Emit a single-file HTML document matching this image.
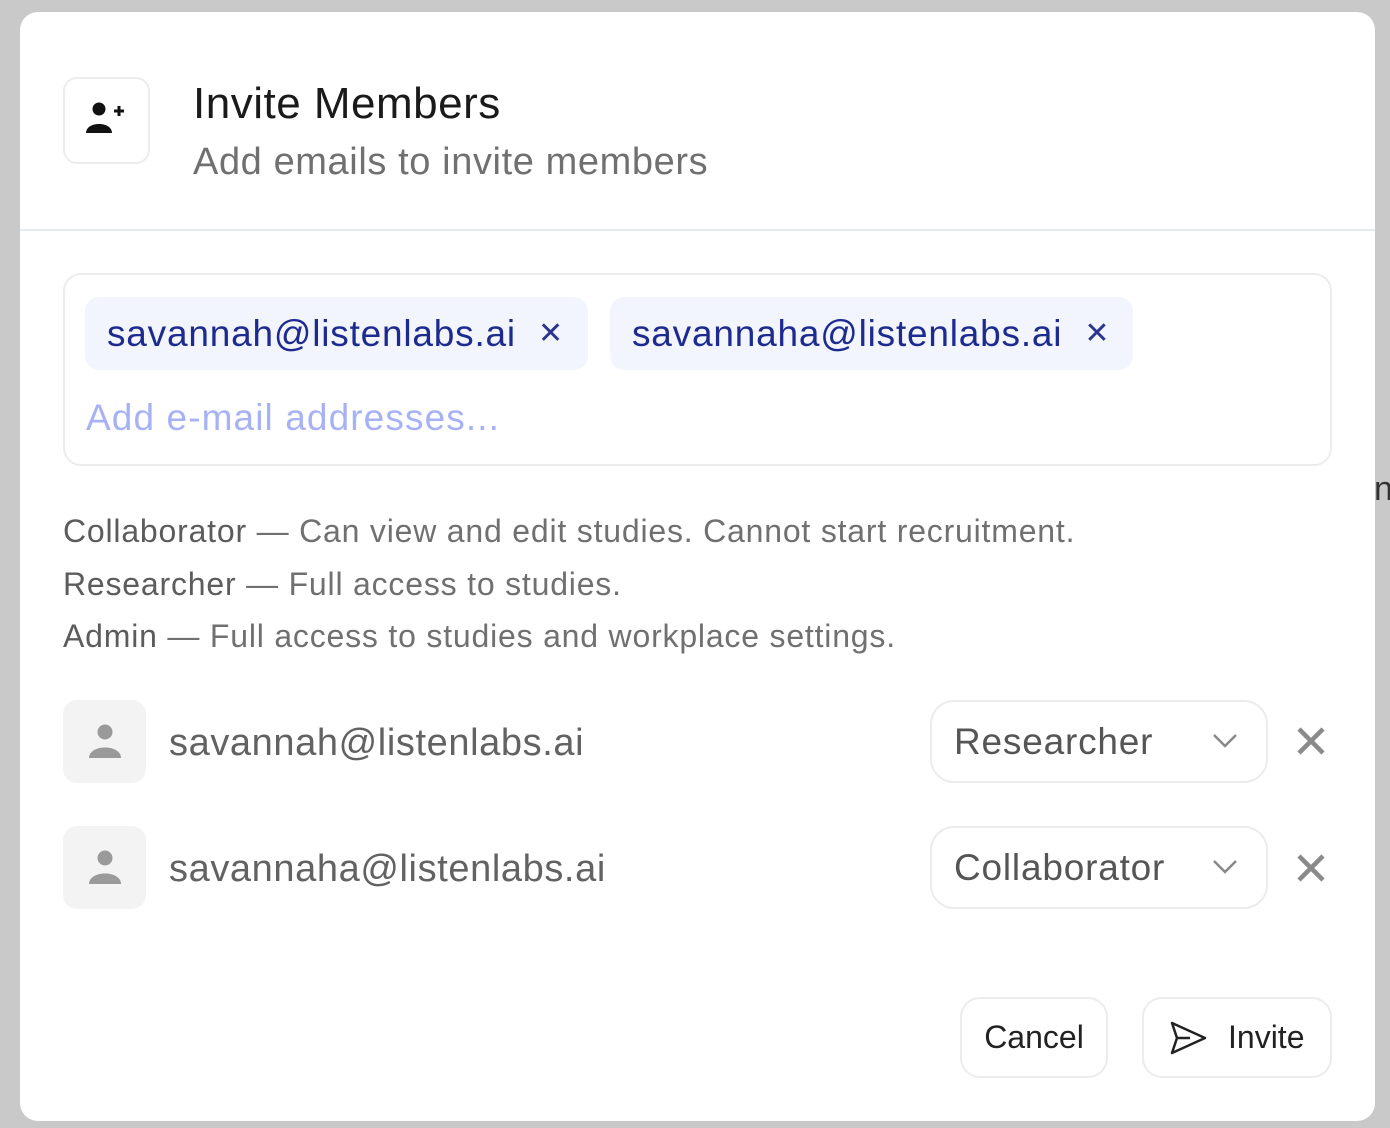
<!DOCTYPE html>
<html><head><meta charset="utf-8"><style>
*{box-sizing:border-box;margin:0;padding:0}
body{width:1390px;height:1128px;background:#c9c9c9;font-family:"Liberation Sans",sans-serif;position:relative;overflow:hidden}
.a{position:absolute;white-space:nowrap}
.modal{position:absolute;left:20px;top:12px;width:1355px;height:1109px;background:#fff;border-radius:18px}
.box{position:absolute;border:2px solid #ececec;border-radius:18px;background:#fff}
.chip{position:absolute;top:297px;height:73px;background:#f2f5fd;border-radius:14px;color:#1d2a8f;font-size:37px;letter-spacing:0.8px;display:flex;align-items:center;padding-left:22px}
.chip span.x{font-size:30px;margin-left:22px;color:#2a3590}
.desc{position:absolute;left:63px;font-size:32px;letter-spacing:0.8px;color:#707070;white-space:nowrap}
.desc b{font-weight:normal;color:#5c5c5c}
.av{position:absolute;left:63px;width:83px;height:83px;background:#f3f3f3;border-radius:14px}
.em{position:absolute;left:169px;font-size:38px;letter-spacing:0.6px;color:#626262;white-space:nowrap}
.sel{position:absolute;left:930px;width:338px;height:83px;border:2px solid #ececec;border-radius:24px;font-size:37px;letter-spacing:0.8px;color:#555;display:flex;align-items:center;padding-left:22px}
.btn{position:absolute;top:997px;height:81px;border:2px solid #ececec;border-radius:20px;font-size:32px;color:#222;display:flex;align-items:center;justify-content:center}
</style></head><body>
<div class="a" style="left:1374px;top:470px;font-size:34px;color:#333">n</div>
<div class="modal"></div>
<div class="box" style="left:63px;top:77px;width:87px;height:87px;border-radius:14px"></div>
<svg class="a" style="left:86px;top:101px" width="40" height="34" viewBox="0 0 40 34">
<circle cx="13" cy="8" r="6.5" fill="#111"/><path d="M0 32 C0 20 26 20 26 32 Z" fill="#111"/>
<path d="M28 10h10M33 5v10" stroke="#111" stroke-width="3"/></svg>
<div class="a" style="left:193px;top:79px;font-size:44px;letter-spacing:0.5px;line-height:50px;color:#1a1a1a">Invite Members</div>
<div class="a" style="left:193px;top:139px;font-size:38px;letter-spacing:0.6px;line-height:46px;color:#707070">Add emails to invite members</div>
<div class="a" style="left:20px;top:229px;width:1355px;height:2px;background:#e7eaee"></div>
<div class="box" style="left:63px;top:273px;width:1269px;height:193px"></div>
<div class="chip" style="left:85px;width:503px">savannah@listenlabs.ai<span class="x">✕</span></div>
<div class="chip" style="left:610px;width:523px">savannaha@listenlabs.ai<span class="x">✕</span></div>
<div class="a" style="left:86px;top:395px;font-size:37px;letter-spacing:1.1px;line-height:46px;color:#a7b2f6">Add e-mail addresses...</div>
<div class="desc" style="top:513px"><b>Collaborator</b> — Can view and edit studies. Cannot start recruitment.</div>
<div class="desc" style="top:566px"><b>Researcher</b> — Full access to studies.</div>
<div class="desc" style="top:618px"><b>Admin</b> — Full access to studies and workplace settings.</div>
<div class="av" style="top:700px"></div>
<svg class="a" style="left:88px;top:723px" width="34" height="36" viewBox="0 0 34 36"><circle cx="17" cy="9" r="7.5" fill="#9a9a9a"/><path d="M1 35 C1 21 33 21 33 35 Z" fill="#9a9a9a"/></svg>
<div class="em" style="top:722px">savannah@listenlabs.ai</div>
<div class="sel" style="top:700px">Researcher</div>
<svg class="a" style="left:1212px;top:732px" width="26" height="18" viewBox="0 0 26 18"><path d="M2 3l11 11 11-11" fill="none" stroke="#888" stroke-width="2.5"/></svg>
<svg class="a" style="left:1297px;top:727px" width="28" height="28" viewBox="0 0 28 28"><path d="M2 2l24 24M26 2L2 26" stroke="#8a8a8a" stroke-width="4.5"/></svg>
<div class="av" style="top:826px"></div>
<svg class="a" style="left:88px;top:849px" width="34" height="36" viewBox="0 0 34 36"><circle cx="17" cy="9" r="7.5" fill="#9a9a9a"/><path d="M1 35 C1 21 33 21 33 35 Z" fill="#9a9a9a"/></svg>
<div class="em" style="top:848px">savannaha@listenlabs.ai</div>
<div class="sel" style="top:826px">Collaborator</div>
<svg class="a" style="left:1212px;top:858px" width="26" height="18" viewBox="0 0 26 18"><path d="M2 3l11 11 11-11" fill="none" stroke="#888" stroke-width="2.5"/></svg>
<svg class="a" style="left:1297px;top:854px" width="28" height="28" viewBox="0 0 28 28"><path d="M2 2l24 24M26 2L2 26" stroke="#8a8a8a" stroke-width="4.5"/></svg>
<div class="btn" style="left:960px;width:148px">Cancel</div>
<div class="btn" style="left:1142px;width:190px;justify-content:flex-start;padding-left:24px">
<svg width="40" height="36" viewBox="0 0 40 36" style="margin-right:20px"><path d="M4 3 L37 18 L4 33 L9 18 Z M9 18 H22" fill="none" stroke="#222" stroke-width="2.5" stroke-linejoin="round"/></svg>Invite</div>
</body></html>
